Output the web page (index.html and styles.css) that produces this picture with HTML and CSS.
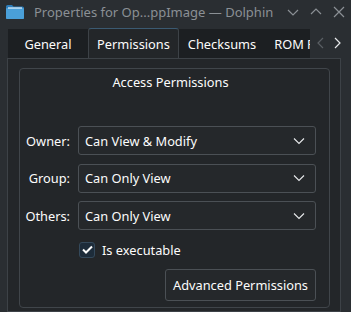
FILE: index.html
```html
<!DOCTYPE html>
<html lang="en">
<head>
    <meta charset="UTF-8">
    <title>Properties for Op...ppImage — Dolphin</title>
    <link rel="stylesheet" href="styles.css">
</head>
<body>
    <div class="titlebar">
        <svg class="app-icon" width="18" height="14" viewBox="0 0 18 14">
            <path d="M0 1.5 Q0 0 1.5 0 H6 L7.5 1.5 H16.5 Q18 1.5 18 3 V12.5 Q18 14 16.5 14 H1.5 Q0 14 0 12.5 Z" fill="#2d7cb8"/>
            <rect x="0" y="3" width="18" height="11" rx="1" fill="#4a9fd8"/>
            <rect x="2" y="2.4" width="14" height="1.2" fill="#e8f4fc"/>
        </svg>
        <span class="title">Properties for Op...ppImage — Dolphin</span>
        <div class="win-buttons">
            <svg width="12" height="12" viewBox="0 0 12 12"><path d="M1 4 L6 9 L11 4" /></svg>
            <svg width="12" height="12" viewBox="0 0 12 12"><path d="M1 8 L6 3 L11 8" /></svg>
            <svg width="12" height="12" viewBox="0 0 12 12"><path d="M1 1 L11 11 M11 1 L1 11" /></svg>
        </div>
    </div>

    <div class="tabbar">
        <div class="tabs">
            <div class="tab">General</div>
            <div class="tab active">Permissions</div>
            <div class="tab">Checksums</div>
            <div class="tab">ROM Properties</div>
        </div>
        <div class="tab-arrows">
            <svg width="10" height="12" viewBox="0 0 10 12"><path class="dim" d="M7 1 L2 6 L7 11" /></svg>
            <svg width="10" height="12" viewBox="0 0 10 12"><path d="M3 1 L8 6 L3 11" /></svg>
        </div>
    </div>

    <div class="panel">
        <div class="groupbox">
            <div class="group-title">Access Permissions</div>
            <div class="form">
                <label>Owner:</label>
                <div class="combo">Can View &amp; Modify<svg width="12" height="8" viewBox="0 0 12 8"><path d="M1 1.5 L6 6.5 L11 1.5" /></svg></div>
                <label>Group:</label>
                <div class="combo">Can Only View<svg width="12" height="8" viewBox="0 0 12 8"><path d="M1 1.5 L6 6.5 L11 1.5" /></svg></div>
                <label>Others:</label>
                <div class="combo">Can Only View<svg width="12" height="8" viewBox="0 0 12 8"><path d="M1 1.5 L6 6.5 L11 1.5" /></svg></div>
                <span></span>
                <div class="check-row">
                    <span class="checkbox"><svg width="11" height="9" viewBox="0 0 11 9"><path d="M1 4.5 L4 7.5 L10 1.5" /></svg></span>
                    Is executable
                </div>
                <span></span>
                <div class="button-row">
                    <button>Advanced Permissions</button>
                </div>
            </div>
        </div>
    </div>
</body>
</html>
```

FILE: styles.css
```css
html, body {
    margin: 0;
    height: 100%;
    overflow: hidden;
}
body {
    font-family: "Noto Sans", "Open Sans", sans-serif;
    font-size: 12.8px;
    color: #fcfcfc;
    background-color: #2a2e32;
}
.titlebar {
    display: flex;
    align-items: center;
    height: 26px;
    padding: 0 0 0 6px;
}
.app-icon {
    margin-top: -2px;
}
.title {
    color: #8b9095;
    margin-left: 10px;
    margin-top: -2px;
    font-size: 13px;
    white-space: nowrap;
}
.win-buttons {
    display: flex;
    gap: 11px;
    margin-left: 14px;
    margin-top: -2px;
}
.win-buttons path {
    fill: none;
    stroke: #8b9095;
    stroke-width: 1.2;
}
.tabbar {
    display: flex;
    height: 31px;
    margin: 1px 0 0 8px;
}
.tabs {
    display: flex;
    align-items: flex-end;
    flex: 1;
    overflow: hidden;
}
.tab {
    min-width: 80px;
    box-sizing: border-box;
    height: 29px;
    padding: 0 9px;
    display: flex;
    align-items: center;
    justify-content: center;
    background-color: #1c1f22;
    white-space: nowrap;
    flex-shrink: 0;
}
.tab.active {
    height: 31px;
    padding: 0 8px;
    background-color: #232629;
    border: 1px solid #3d4247;
    border-top-color: #3b5a72;
    border-bottom: none;
    border-radius: 3px 3px 0 0;
    position: relative;
    z-index: 1;
    margin-bottom: -1px;
}
.tab-arrows {
    display: flex;
    align-items: center;
    gap: 6px;
    width: 41px;
    padding-left: 6px;
    box-sizing: border-box;
    background-color: #2a2e32;
}
.tab-arrows path {
    fill: none;
    stroke: #e8eaec;
    stroke-width: 1.2;
}
.tab-arrows path.dim {
    stroke: #5a5f64;
}
.panel {
    margin: 0 10px 0 7px;
    height: 243px;
    background-color: #232629;
    border: 1px solid #3d4247;
    padding: 9px 10px 0 11px;
}
.groupbox {
    border: 1px solid #40454a;
    border-radius: 4px;
    height: 238px;
    padding: 0 13px 0 5px;
}
.group-title {
    text-align: center;
    margin-top: 4px;
    line-height: 18px;
}
.form {
    display: grid;
    grid-template-columns: 45px 1fr;
    column-gap: 8px;
    row-gap: 8.5px;
    align-items: center;
    margin-top: 35px;
}
.form label {
    text-align: right;
    white-space: nowrap;
}
.combo {
    height: 29px;
    box-sizing: border-box;
    border: 1px solid #4b5055;
    border-radius: 3px;
    background-color: #25282b;
    display: flex;
    align-items: center;
    justify-content: space-between;
    padding: 0 10px 0 6px;
}
.combo path {
    fill: none;
    stroke: #e8eaec;
    stroke-width: 1.1;
}
.check-row {
    display: flex;
    align-items: center;
    gap: 7px;
    height: 22px;
    margin-left: 1px;
}
.checkbox {
    width: 16px;
    height: 16px;
    box-sizing: border-box;
    border: 1px solid #34495b;
    border-radius: 3px;
    background-color: #1d2c3a;
    display: flex;
    align-items: center;
    justify-content: center;
}
.checkbox path {
    fill: none;
    stroke: #fcfcfc;
    stroke-width: 2;
}
.button-row {
    display: flex;
    justify-content: flex-end;
}
.button-row button {
    font-family: inherit;
    font-size: inherit;
    color: #fcfcfc;
    height: 32px;
    padding: 0 7px;
    background-color: #25282b;
    border: 1px solid #4b5055;
    border-radius: 3px;
}
```
